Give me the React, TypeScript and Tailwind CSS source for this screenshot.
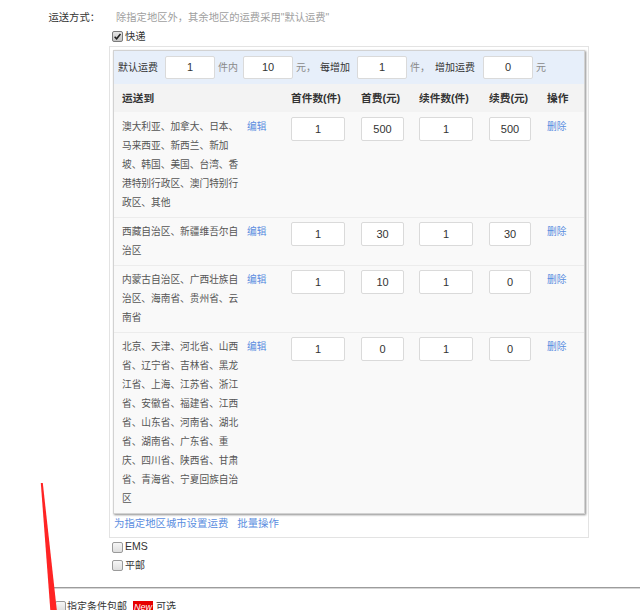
import React from "react";

function Box({ checked }: { checked?: boolean }) {
  return (
    <span
      className={
        "inline-flex w-[11px] h-[11px] shrink-0 items-center justify-center rounded-[2px] border " +
        (checked
          ? "border-[#7a7a7a] bg-linear-to-b from-[#e6e6e6] to-[#c4c4c4]"
          : "border-[#9a9a9a] bg-linear-to-b from-[#f6f6f6] to-[#dedede]")
      }
    >
      {checked && (
        <svg viewBox="0 0 10 10" className="w-[9px] h-[9px]">
          <path d="M1.8 5.3 L4 7.6 L8.3 2.3" stroke="#1e1e1e" strokeWidth="1.7" fill="none" />
        </svg>
      )}
    </span>
  );
}

function Field({ v, w, h = 24 }: { v: string; w: string; h?: number }) {
  return (
    <div
      className={
        w +
        " " +
        (h === 24 ? "h-[24px]" : "h-[23px]") +
        " shrink-0 bg-white border border-[#dadada] rounded-[2px] flex items-center justify-center text-[11px] text-[#333] font-['Liberation_Sans',sans-serif]"
      }
    >
      {v}
    </div>
  );
}

type Row = { lines: string[]; a: string; b: string; c: string; d: string };

const rows: Row[] = [
  {
    lines: ["澳大利亚、加拿大、日本、", "马来西亚、新西兰、新加", "坡、韩国、美国、台湾、香", "港特别行政区、澳门特别行", "政区、其他"],
    a: "1",
    b: "500",
    c: "1",
    d: "500",
  },
  { lines: ["西藏自治区、新疆维吾尔自", "治区"], a: "1", b: "30", c: "1", d: "30" },
  { lines: ["内蒙古自治区、广西壮族自", "治区、海南省、贵州省、云", "南省"], a: "1", b: "10", c: "1", d: "0" },
  {
    lines: [
      "北京、天津、河北省、山西",
      "省、辽宁省、吉林省、黑龙",
      "江省、上海、江苏省、浙江",
      "省、安徽省、福建省、江西",
      "省、山东省、河南省、湖北",
      "省、湖南省、广东省、重",
      "庆、四川省、陕西省、甘肃",
      "省、青海省、宁夏回族自治",
      "区",
    ],
    a: "1",
    b: "0",
    c: "1",
    d: "0",
  },
];

const grid = "grid grid-cols-[133px_44px_70px_58px_70px_58px_1fr]";

export default function App() {
  return (
    <div className="relative w-[640px] h-[610px] overflow-hidden bg-white text-[10px] text-[#333] font-['Liberation_Sans','Noto_Sans_CJK_SC',sans-serif]">
      <div className="flex pt-[8px]">
        <div className="w-[100px] text-right leading-[19px] text-[10.3px]">运送方式：</div>
        <div className="ml-[9px] flex flex-col">
          <div className="pl-[7px] leading-[19px] text-[10.3px] text-[#a0a0a0]">除指定地区外，其余地区的运费采用"默认运费"</div>
          <div className="flex items-center pl-[3px] h-[19px]">
            <Box checked />
            <span className="ml-[2px] leading-[19px] text-[10.3px]">快递</span>
          </div>
          <div className="w-[480px] border border-[#e3e3e3] px-[3px] pt-[3px] pb-[4px]">
            <div className="border border-[#d2d2d2] bg-[#f9f9f9] shadow-[1px_1px_2px_rgba(0,0,0,0.45)]">
              <div className="flex items-center h-[33px] pl-[4px] bg-[#e7effa]">
                <span>默认运费</span>
                <div className="ml-[7px]"><Field v="1" w="w-[50px]" h={23} /></div>
                <span className="ml-[3px] text-[#8a8a8a]">件内</span>
                <div className="ml-[5px]"><Field v="10" w="w-[50px]" h={23} /></div>
                <span className="ml-[3px] text-[#8a8a8a]">元，</span>
                <span className="ml-[4px]">每增加</span>
                <div className="ml-[7px]"><Field v="1" w="w-[50px]" h={23} /></div>
                <span className="ml-[3px] text-[#8a8a8a]">件，</span>
                <span className="ml-[5px]">增加运费</span>
                <div className="ml-[8px]"><Field v="0" w="w-[50px]" h={23} /></div>
                <span className="ml-[3px] text-[#8a8a8a]">元</span>
              </div>
              <div className={grid + " h-[28px] items-center bg-[#f3f3f3] font-bold text-[10.7px] text-[#333]"}>
                <div className="pl-[8px]">运送到</div>
                <div />
                <div>首件数(件)</div>
                <div>首费(元)</div>
                <div>续件数(件)</div>
                <div>续费(元)</div>
                <div>操作</div>
              </div>
              {rows.map((r, i) => (
                <div
                  key={i}
                  className={
                    grid +
                    " items-start pb-[5px] " +
                    (i === 0 ? "pt-[5px]" : "pt-[4px] border-t border-[#ececec]")
                  }
                >
                  <div className="pl-[8px] text-[9.7px] text-[#555] leading-[19px] whitespace-nowrap">
                    {r.lines.map((l, j) => (
                      <div key={j}>{l}</div>
                    ))}
                  </div>
                  <div className="text-[9.7px] leading-[19px] text-[#5a8de0]">编辑</div>
                  <div><Field v={r.a} w="w-[54px]" /></div>
                  <div><Field v={r.b} w="w-[43px]" /></div>
                  <div><Field v={r.c} w="w-[54px]" /></div>
                  <div><Field v={r.d} w="w-[42px]" /></div>
                  <div className="text-[9.7px] leading-[19px] text-[#5a8de0]">删除</div>
                </div>
              ))}
            </div>
            <div className="flex pl-[1px] leading-[19px] text-[10.4px] text-[#5a8de0]">
              <span>为指定地区城市设置运费</span>
              <span className="ml-[9px]">批量操作</span>
            </div>
          </div>
          <div className="flex items-center pl-[3px] h-[18px]">
            <Box />
            <span className="ml-[2px] text-[10.5px] text-[#333]">EMS</span>
          </div>
          <div className="flex items-center pl-[3px] h-[18px]">
            <Box />
            <span className="ml-[2px]">平邮</span>
          </div>
        </div>
      </div>
      <div className="ml-[53px] mt-[13px]">
        <div className="h-px bg-[#9c9c9c]" />
        <div className="h-px bg-[#d6d6d6]" />
      </div>
      <div className="flex items-center pl-[55px] mt-[8px] h-[19px]">
        <Box />
        <span className="ml-[1px]">指定条件包邮</span>
        <span className="ml-[6px] bg-[#e60000] text-white text-[9px] leading-[12px] px-[1px] italic">New</span>
        <span className="ml-[3px]">可选</span>
      </div>
      <svg className="absolute left-0 top-0 w-[640px] h-[610px] pointer-events-none" viewBox="0 0 640 610">
        <polygon points="40.8,483 42.8,483 56.8,610 50.3,610" fill="#ff2424" />
      </svg>
    </div>
  );
}
